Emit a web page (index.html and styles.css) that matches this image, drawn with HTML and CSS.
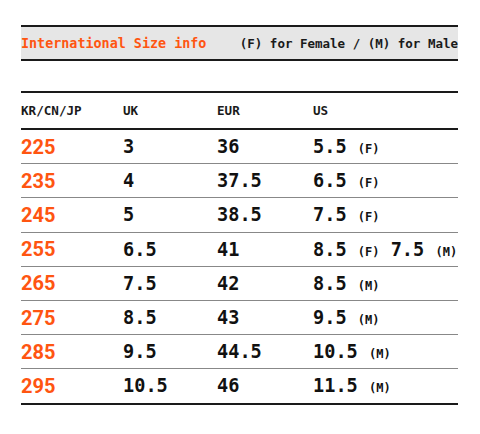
FILE: index.html
```html
<!DOCTYPE html>
<html>
<head>
<meta charset="utf-8">
<link rel="stylesheet" href="styles.css">
</head>
<body>
<div class="wrap">
  <div class="info">
    <span class="info-title">International Size info</span>
    <span class="info-note">(F) for Female / (M) for Male</span>
  </div>
  <table class="sizes">
    <thead>
      <tr><th class="c1">KR/CN/JP</th><th class="c2">UK</th><th class="c3">EUR</th><th class="c4">US</th></tr>
    </thead>
    <tbody>
      <tr><td class="kr">225</td><td>3</td><td>36</td><td>5.5 <small>(F)</small></td></tr>
      <tr><td class="kr">235</td><td>4</td><td>37.5</td><td>6.5 <small>(F)</small></td></tr>
      <tr><td class="kr">245</td><td>5</td><td>38.5</td><td>7.5 <small>(F)</small></td></tr>
      <tr><td class="kr">255</td><td>6.5</td><td>41</td><td>8.5 <small>(F)</small> 7.5 <small>(M)</small></td></tr>
      <tr><td class="kr">265</td><td>7.5</td><td>42</td><td>8.5 <small>(M)</small></td></tr>
      <tr><td class="kr">275</td><td>8.5</td><td>43</td><td>9.5 <small>(M)</small></td></tr>
      <tr><td class="kr">285</td><td>9.5</td><td>44.5</td><td>10.5 <small>(M)</small></td></tr>
      <tr><td class="kr">295</td><td>10.5</td><td>46</td><td>11.5 <small>(M)</small></td></tr>
    </tbody>
  </table>
</div>
</body>
</html>
```
FILE: styles.css
```css
html, body { margin: 0; padding: 0; background: #fff; }
.wrap {
  padding: 25px 22px 0 21px;
  width: 437px;
  font-family: "DejaVu Sans Mono", monospace;
  color: #111;
}
.info {
  display: flex;
  align-items: center;
  justify-content: space-between;
  height: 32px;
  background: #e6e6e6;
  border-top: 2px solid #1a1a1a;
  border-bottom: 2px solid #1a1a1a;
}
.info-title {
  color: #ff5511;
  font-weight: bold;
  font-size: 13.4px;
}
.info-note {
  font-size: 12.5px;
  font-weight: bold;
  color: #1a1a1a;
  white-space: nowrap;
}
.sizes {
  margin-top: 30px;
  width: 437px;
  border-collapse: collapse;
  border-top: 2px solid #1a1a1a;
  border-bottom: 2px solid #1a1a1a;
  table-layout: fixed;
}
.sizes th {
  text-align: left;
  font-weight: bold;
  font-size: 12.6px;
  letter-spacing: 0;
  color: #1a1a1a;
  height: 35px;
  padding: 0;
  border-bottom: 2px solid #1a1a1a;
}
.c1 { width: 102px; }
.c2 { width: 94px; }
.c3 { width: 96px; }
.sizes td {
  height: 33.2px;
  padding: 0;
  font-size: 18.6px;
  font-weight: bold;
  white-space: nowrap;
  border-top: 1px solid #888;
  overflow: visible;
}
.sizes tbody tr:first-child td { border-top: none; }
.sizes td.kr {
  font-family: Roboto, sans-serif;
  font-weight: bold;
  font-size: 20px;
  color: #ff5511;
}
.sizes small {
  font-size: 12px;
  font-weight: bold;
}
```
